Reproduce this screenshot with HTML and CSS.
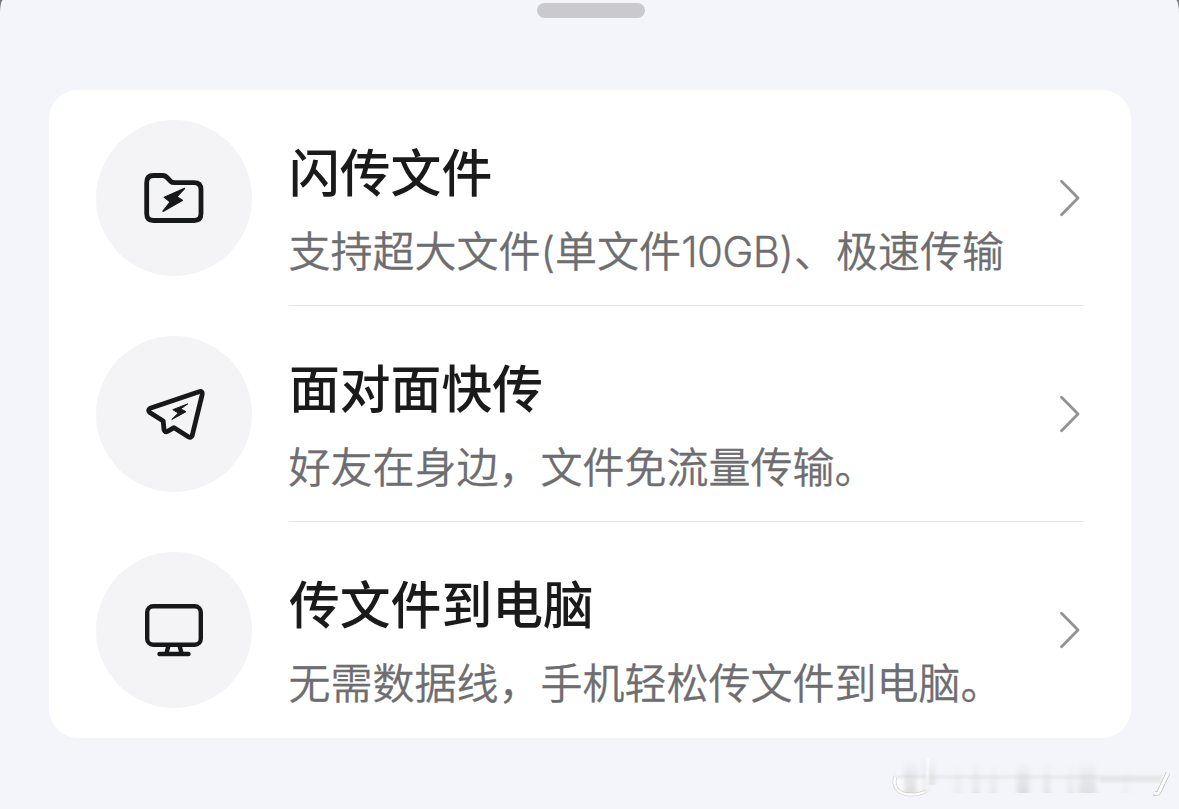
FILE: index.html
```html
<!DOCTYPE html>
<html lang="zh-CN">
<head>
<meta charset="utf-8">
<title>传文件</title>
<link rel="stylesheet" href="styles.css">
</head>
<body>
<main class="sheet">
  <div class="handle"></div>
  <ul class="card">
    <li class="row">
      <span class="badge">
        <svg class="icon" viewBox="0 -2 80 80" fill="none" stroke="#17181a" stroke-width="4.8" stroke-linejoin="round" stroke-linecap="round">
          <path d="M19.500 15.500H28.500Q31.500 15.500 33.500 18L36.500 21.200Q38 22.700 40.500 22.700H60Q67 22.700 67 29.700V53.500Q67 60.500 60 60.500H19.500Q12.700 60.500 12.700 53.500V22.500Q12.700 15.500 19.500 15.500Z"/>
          <path d="M50.500 28.500L30.300 37.300L36.300 42L29 51.300L48.300 40.300L42.800 36.800Z" fill="#17181a" stroke-width="1.400"/>
        </svg>
      </span>
      <div class="body">
        <div class="text">
          <h2 class="title">闪传文件</h2>
          <p class="desc">支持超大文件(单文件<span class="size">10GB</span>)、极速传输</p>
        </div>
        <svg class="chevron" viewBox="0 0 24 40"><path d="M4.500 3.200L21 20L4.500 36.800"/></svg>
      </div>
    </li>
    <li class="row">
      <span class="badge">
        <svg class="icon" viewBox="0 -1 80 80" fill="none" stroke="#17181a" stroke-width="4.800" stroke-linejoin="round" stroke-linecap="round">
          <path d="M16.200 33.200L65 16.700Q68.800 15.700 68.200 19.500L58.200 60.500Q57.200 63.500 54.300 61.700L40 52.700L33.500 56.300Q30.600 57.700 30 54.500L29.200 46L15.800 37.500Q13.300 35 16.200 33.200Z"/>
          <path d="M53.500 29L38.800 34.700L44.300 38L37.800 44.500L52 36.700L47 34Z" fill="#17181a" stroke-width="1"/>
        </svg>
      </span>
      <div class="body">
        <div class="text">
          <h2 class="title">面对面快传</h2>
          <p class="desc">好友在身边，文件免流量传输。</p>
        </div>
        <svg class="chevron" viewBox="0 0 24 40"><path d="M4.500 3.200L21 20L4.500 36.800"/></svg>
      </div>
    </li>
    <li class="row">
      <span class="badge">
        <svg class="icon" viewBox="0 0 80 80" fill="none" stroke="#17181a" stroke-width="4.400" stroke-linejoin="round" stroke-linecap="round">
          <rect x="13.200" y="16.200" width="53.600" height="38.600" rx="6"/>
          <path d="M25.500 64H54.500M34.500 55.500L32.500 63M45.500 55.500L47.500 63"/>
        </svg>
      </span>
      <div class="body">
        <div class="text">
          <h2 class="title">传文件到电脑</h2>
          <p class="desc">无需数据线，手机轻松传文件到电脑。</p>
        </div>
        <svg class="chevron" viewBox="0 0 24 40"><path d="M4.500 3.200L21 20L4.500 36.800"/></svg>
      </div>
    </li>
  </ul>
  <svg class="smear" viewBox="0 0 319 69" fill="none">
    <defs>
      <linearGradient id="fade" x1="0" y1="0" x2="0" y2="1">
        <stop offset="0" stop-color="#b8b8b8" stop-opacity="0"/>
        <stop offset=".65" stop-color="#b8b8b8" stop-opacity=".32"/>
        <stop offset="1" stop-color="#b8b8b8" stop-opacity=".45"/>
      </linearGradient>
      <filter id="soft" filterUnits="userSpaceOnUse" x="30" y="10" width="285" height="50"><feGaussianBlur stdDeviation="2.500 .5"/></filter>
      <filter id="band" filterUnits="userSpaceOnUse" x="20" y="20" width="295" height="45"><feGaussianBlur stdDeviation="1.500"/></filter>
    </defs>
    <path d="M35 37H67V50Q58 57 46 54Q32 51 35 37Z" fill="#fff" opacity=".7"/>
    <path d="M35 37H302" stroke="#dcdde1" stroke-width="3" opacity=".6" filter="url(#band)"/>
    <path d="M35 37Q32 51 46 54Q57 56 66 51" stroke="#c4c4c6" stroke-width="3.600"/>
    <path d="M35 37Q32 51 46 54Q57 56 66 51" stroke="#fff" stroke-width="2.500"/>
    <path d="M68 18L67 48" stroke="#fff" stroke-width="3" opacity=".7"/>
    <g fill="url(#fade)" filter="url(#soft)">
      <rect x="44" y="20" width="13" height="33"/>
      <rect x="63" y="16" width="3" height="36"/>
      <rect x="70" y="17" width="4" height="28"/>
      <rect x="94" y="22" width="8" height="31" opacity=".3"/>
      <rect x="113" y="22" width="6" height="31" opacity=".6"/>
      <rect x="130" y="22" width="6" height="31" opacity=".5"/>
      <rect x="157" y="21" width="12" height="32" opacity=".9"/>
      <rect x="184" y="21" width="6" height="32" opacity=".7"/>
      <rect x="208" y="22" width="6" height="31" opacity=".5"/>
      <rect x="219" y="21" width="17" height="32" opacity=".8"/>
      <rect x="262" y="24" width="8" height="29" opacity=".2"/>
    </g>
    <path d="M240 40H302" stroke="#cfd0d3" stroke-width="4" opacity=".4" filter="url(#band)"/>
    <path d="M308 33L299 52Q297 55 294 53" stroke="#c0c0c3" stroke-width="4.600"/>
    <path d="M308 33L299 52Q297 55 294 53" stroke="#fff" stroke-width="3"/>
  </svg>
</main>
</body>
</html>
```
FILE: styles.css
```css
* { box-sizing: border-box; }
body {
  margin: 0;
  background: #77777b;
  font-family: Inter, "Noto Sans CJK SC", sans-serif;
}
.sheet {
  position: relative;
  height: 809px;
  padding: 3px 48px 0 49px;
  background: #f4f5fa;
  border-radius: 3px 3px 0 0 / 14px 14px 0 0;
  overflow: hidden;
}
.handle {
  width: 108px;
  height: 15px;
  margin: 0 auto 72px 488px;
  border-radius: 8px;
  background: #c9c9ce;
}
.card {
  height: 648px;
  margin: 0;
  padding: 0;
  list-style: none;
  background: #fff;
  border-radius: 29px;
}
.row {
  display: flex;
  align-items: center;
  height: 216px;
  padding: 0 48px 0 47px;
}
.badge {
  display: flex;
  align-items: center;
  justify-content: center;
  flex: none;
  width: 156px;
  height: 156px;
  margin-right: 37px;
  border-radius: 50%;
  background: #f4f4f7;
}
.icon { width: 80px; height: 80px; }
.body {
  display: flex;
  align-items: center;
  justify-content: space-between;
  flex: 1;
  height: 216px;
  border-bottom: 1px solid #e7e7ea;
}
.row:last-child .body { border-bottom-color: transparent; }
.text { padding-top: 30px; }
.title {
  margin: 0;
  font-size: 50.8px;
  line-height: 76px;
  font-weight: 500;
  color: #1a1a1b;
  white-space: nowrap;
}
.desc {
  margin: 2px 0 0 -0.5px;
  font-size: 42px;
  line-height: 76px;
  font-weight: 350;
  color: #6e6e70;
  -webkit-text-stroke: 0.3px #6e6e70;
  white-space: nowrap;
}
.size { letter-spacing: -0.7px; }
.chevron {
  flex: none;
  width: 24px;
  height: 40px;
  margin-right: 2px;
  fill: none;
  stroke: #929294;
  stroke-width: 2.8;
  stroke-linecap: round;
  stroke-linejoin: round;
}
.smear {
  position: absolute;
  right: 0;
  bottom: 0;
  width: 319px;
  height: 69px;
}
```
